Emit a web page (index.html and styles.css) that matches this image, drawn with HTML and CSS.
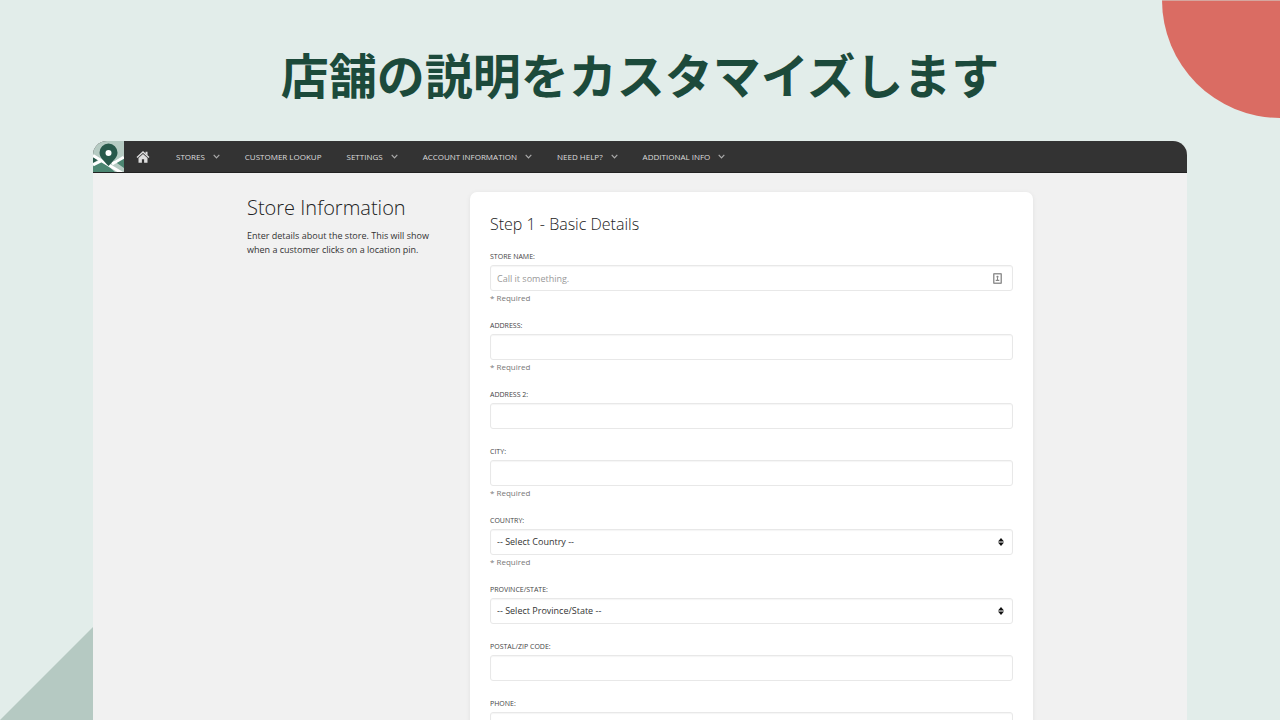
FILE: index.html
```html
<!DOCTYPE html>
<html lang="ja">
<head>
<meta charset="utf-8">
<meta name="viewport" content="width=device-width, initial-scale=1">
<title>店舗の説明をカスタマイズします</title>
<link rel="stylesheet" href="styles.css">
</head>
<body>
<div class="slide">
  <div class="deco-circle"></div>
  <div class="deco-triangle"></div>
  <h1 class="headline">店舗の説明をカスタマイズします</h1>
  <div class="window" lang="en">
    <nav class="navbar">
      <a class="logo" href="#" aria-label="Store locator">
        <svg viewBox="0 0 31 31" aria-hidden="true">
          <rect width="31" height="31" fill="#b6cbc3"/>
          <path d="M0 23l8-4 14 12H0zM21 20l10-5v12z" fill="#4c8672"/>
          <path d="M0 16l5 3-5 3z" fill="#28594b"/>
          <path d="M0 14.500l9 5.500L29 32M0 24l9-4.500M19 23l12-7" fill="none" stroke="#fff" stroke-width="3"/>
          <path d="M15.500 25C10 19 6.500 16 6.500 11.500a9 9 0 0 1 18 0c0 4.500-3.500 7.500-9 13.500z" fill="#28594b"/>
          <circle cx="15.500" cy="12" r="3" fill="#fff"/>
        </svg>
      </a>
      <a class="home" href="#" aria-label="Home">
        <svg viewBox="0 0 13 12" aria-hidden="true">
          <path d="M0.500 6.500L6.500 1l6 5.500" fill="none" stroke="#ddd" stroke-width="1.400"/>
          <path d="M9 .8h2v3.500L9 2.500z" fill="#ddd"/>
          <path d="M6.500 3L2 7v4.800h3.400V8.300h2.200v3.500H11V7z" fill="#ddd"/>
        </svg>
      </a>
      <ul class="menu">
        <li><a href="#">STORES <svg class="chev" viewBox="0 0 7 5" aria-hidden="true"><path d="M.7.8l2.800 3L6.300.8"/></svg></a></li>
        <li><a href="#">CUSTOMER LOOKUP</a></li>
        <li><a href="#">SETTINGS <svg class="chev" viewBox="0 0 7 5" aria-hidden="true"><path d="M.7.8l2.800 3L6.300.8"/></svg></a></li>
        <li><a href="#">ACCOUNT INFORMATION <svg class="chev" viewBox="0 0 7 5" aria-hidden="true"><path d="M.7.8l2.800 3L6.300.8"/></svg></a></li>
        <li><a href="#">NEED HELP? <svg class="chev" viewBox="0 0 7 5" aria-hidden="true"><path d="M.7.8l2.800 3L6.300.8"/></svg></a></li>
        <li><a href="#">ADDITIONAL INFO <svg class="chev" viewBox="0 0 7 5" aria-hidden="true"><path d="M.7.8l2.800 3L6.300.8"/></svg></a></li>
      </ul>
    </nav>
    <main class="content">
      <section class="intro">
        <h2>Store Information</h2>
        <p>Enter details about the store. This will show when a customer clicks on a location pin.</p>
      </section>
      <form class="card">
        <h3>Step 1 - Basic Details</h3>
        <div class="field">
          <label for="name">STORE NAME:</label>
          <div class="control">
            <input id="name" type="text" placeholder="Call it something.">
            <svg class="contact" viewBox="0 0 9 11" aria-hidden="true">
              <rect x=".75" y=".75" width="7.500" height="9.500" rx=".5" fill="#fff" stroke="#959595" stroke-width="1.500"/>
              <circle cx="4.500" cy="3.800" r="1.100" fill="#858585"/>
              <path d="M4 4.500h1v2.300h1.300v1.200H2.700V6.800H4z" fill="#858585"/>
            </svg>
          </div>
          <p class="help">* Required</p>
        </div>
        <div class="field">
          <label for="address">ADDRESS:</label>
          <div class="control"><input id="address" type="text"></div>
          <p class="help">* Required</p>
        </div>
        <div class="field">
          <label for="address2">ADDRESS 2:</label>
          <div class="control"><input id="address2" type="text"></div>
        </div>
        <div class="field">
          <label for="city">CITY:</label>
          <div class="control"><input id="city" type="text"></div>
          <p class="help">* Required</p>
        </div>
        <div class="field">
          <label for="country">COUNTRY:</label>
          <div class="control">
            <select id="country"><option>-- Select Country --</option></select>
            <svg class="sort" viewBox="0 0 6 8" aria-hidden="true"><path d="M3 0l3 3.400H0zM3 8l3-3.400H0z"/></svg>
          </div>
          <p class="help">* Required</p>
        </div>
        <div class="field">
          <label for="state">PROVINCE/STATE:</label>
          <div class="control">
            <select id="state"><option>-- Select Province/State --</option></select>
            <svg class="sort" viewBox="0 0 6 8" aria-hidden="true"><path d="M3 0l3 3.400H0zM3 8l3-3.400H0z"/></svg>
          </div>
        </div>
        <div class="field">
          <label for="zip">POSTAL/ZIP CODE:</label>
          <div class="control"><input id="zip" type="text"></div>
        </div>
        <div class="field">
          <label for="phone">PHONE:</label>
          <div class="control"><input id="phone" type="tel"></div>
        </div>
      </form>
    </main>
  </div>
</div>
</body>
</html>
```
FILE: styles.css
```css
* { box-sizing: border-box; }

body {
  margin: 0;
  background: #e2edea;
  color: #333;
  font-family: "Open Sans", "Noto Sans", sans-serif;
}

h1, h2, h3, p, ul { margin: 0; padding: 0; }

.slide {
  position: relative;
  display: flex;
  flex-direction: column;
  height: 100vh;
  overflow: hidden;
}

.deco-circle {
  position: absolute;
  top: -118px;
  right: -118px;
  width: 236px;
  height: 236px;
  border-radius: 50%;
  background: linear-gradient(#d5a69f 119px, #da6c63 119px);
}

.deco-triangle {
  position: absolute;
  left: 0;
  bottom: 0;
  width: 93px;
  height: 93px;
  background: #b5c9c2;
  clip-path: polygon(100% 0, 100% 100%, 0 100%);
}

.headline {
  position: relative;
  padding: 37px 0 32px;
  color: #1c4a3b;
  font: 700 48px/72px "Noto Sans CJK JP", sans-serif;
  text-align: center;
}

.window {
  position: relative;
  flex: 1;
  min-height: 0;
  margin: 0 93px;
  overflow: hidden;
  border-radius: 14px 14px 0 0;
  background: #f1f1f1;
}

.navbar {
  display: flex;
  align-items: center;
  height: 32px;
  border-bottom: 1px solid #222;
  background: #333;
}

.logo, .logo svg { display: block; width: 31px; height: 31px; }

.home { margin: 0 26px 0 12px; }
.home svg { display: block; width: 14px; height: 12px; }

.menu {
  display: flex;
  gap: 25px;
  list-style: none;
}

.menu a {
  display: flex;
  align-items: center;
  gap: 8px;
  color: #ddd;
  font-size: 8px;
  font-weight: 400;
  line-height: 10px;
  text-decoration: none;
  white-space: nowrap;
}

.chev { width: 7px; height: 5px; fill: none; stroke: #aaa; stroke-width: 1.2; }

.content {
  display: grid;
  grid-template-columns: 197px minmax(0, 1fr);
  gap: 26px;
  align-items: start;
  max-width: 786px;
  margin: 0 auto;
  padding-top: 19px;
}

.intro { padding-top: 1px; }

.intro h2 {
  margin-bottom: 6px;
  color: #222;
  font-size: 20px;
  font-weight: 300;
  line-height: 30px;
}

.intro p { font-size: 9px; line-height: 14px; }

.card {
  padding: 20px;
  border-radius: 7px;
  background: #fff;
  box-shadow: 0 1px 5px rgba(0, 0, 0, .07);
}

.card h3 {
  margin-bottom: 17px;
  color: #222;
  font-size: 16px;
  font-weight: 300;
  line-height: 24px;
}

.field { margin-bottom: 19px; }

.field label {
  display: block;
  margin-bottom: 4px;
  color: #444;
  font-size: 7px;
  font-weight: 400;
  line-height: 8px;
}

.control { position: relative; }

.control input, .control select {
  display: block;
  width: 100%;
  height: 26px;
  padding: 0 6px;
  border: 1px solid #e8e8e8;
  border-radius: 3px;
  background: #fff;
  box-shadow: inset 0 1px 1px rgba(0, 0, 0, .04);
  color: #333;
  font: 9px/14px "Open Sans", "Noto Sans", sans-serif;
  appearance: none;
}

.control input::placeholder { color: #999; opacity: 1; }

.contact { position: absolute; top: 8px; right: 11px; width: 9px; height: 11px; }
.sort { position: absolute; top: 9px; right: 9px; width: 6px; height: 8px; fill: #111; pointer-events: none; }

.help {
  margin-top: 2px;
  color: #777;
  font-size: 8px;
  line-height: 10px;
}
```
